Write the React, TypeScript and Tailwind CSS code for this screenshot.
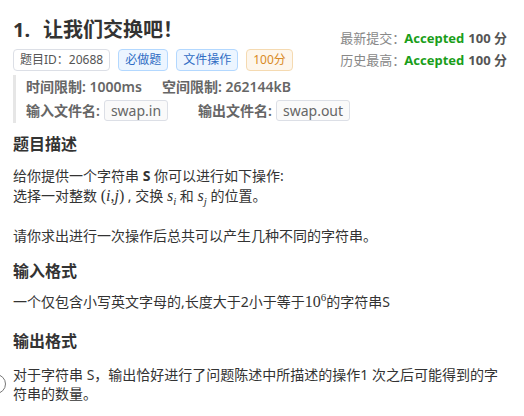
import React from "react";

const F = { fontFamily: '"Noto Sans", "Noto Sans CJK SC", sans-serif' };
const M = { fontFamily: '"Liberation Serif", "DejaVu Serif", serif' };

function Badge({ children, cls }: { children: React.ReactNode; cls: string }) {
  return (
    <span className={`inline-flex h-[22px] items-center whitespace-nowrap rounded-[4px] border px-[6px] text-[12px] leading-none ${cls}`}>
      {children}
    </span>
  );
}

function FileBox({ children }: { children: React.ReactNode }) {
  return (
    <span className="ml-[4px] inline-flex h-[21px] items-center rounded-[3px] border border-[#dcdfe6] bg-[#fafafa] px-[6px] text-[14px] font-normal text-[#666]">
      {children}
    </span>
  );
}

function Sub({ children }: { children: React.ReactNode }) {
  return <span className="relative top-[4px] text-[11px] leading-none">{children}</span>;
}

export default function App() {
  return (
    <div className="relative h-[416px] w-[524px] overflow-hidden bg-white text-[#333]" style={F}>
      <div className="px-[13px] pt-[16px]">
        <div className="flex justify-between">
          <div>
            <div className="flex h-[28px] items-center whitespace-nowrap text-[20px] font-bold leading-[28px] text-[#333]">
              <span className="mr-[13px]">1.</span>
              <span>让我们交换吧！</span>
            </div>
            <div className="mt-[5px] flex items-center gap-[8px]">
              <Badge cls="border-[#dcdfe6] bg-white text-[#555]">题目ID：20688</Badge>
              <Badge cls="border-[#b3d8ff] bg-[#ecf5ff] text-[#2f6cc4]">必做题</Badge>
              <Badge cls="border-[#b3d8ff] bg-[#ecf5ff] text-[#2f6cc4]">文件操作</Badge>
              <Badge cls="border-[#f5dab1] bg-[#fdf6ec] text-[#d98a24]">100分</Badge>
            </div>
          </div>
          <div className="mr-[4px] mt-[11px] whitespace-nowrap text-[13px] leading-[22px]">
            <div className="flex h-[22px] items-center">
              <span className="w-[64px] text-[#888]">最新提交：</span>
              <span className="font-bold text-[#1a9e1a]">Accepted</span>
              <span className="ml-[4px] font-bold text-[#555]">100 分</span>
            </div>
            <div className="flex h-[22px] items-center">
              <span className="w-[64px] text-[#888]">历史最高：</span>
              <span className="font-bold text-[#1a9e1a]">Accepted</span>
              <span className="ml-[4px] font-bold text-[#555]">100 分</span>
            </div>
          </div>
        </div>

        <div className="mt-[4px] border-l-[3px] border-[#e6e6e6] pl-[10px] text-[14px] font-semibold text-[#666]">
          <div className="flex h-[23px] items-center whitespace-nowrap">
            <span>时间限制: 1000ms</span>
            <span className="ml-[20px]">空间限制: 262144kB</span>
          </div>
          <div className="flex h-[25px] items-center whitespace-nowrap">
            <span>输入文件名:</span>
            <FileBox>swap.in</FileBox>
            <span className="ml-[30px]">输出文件名:</span>
            <FileBox>swap.out</FileBox>
          </div>
        </div>

        <h2 className="mt-[9px] text-[16px] font-bold leading-[24px]">题目描述</h2>
        <div className="mt-[10px] text-[14px] leading-[20px]">
          <p className="h-[20px]">
            给你提供一个字符串 <b>S</b> 你可以进行如下操作:
          </p>
          <p className="h-[20px]">
            选择一对整数{" "}
            <span style={M} className="text-[16px]">
              (<i>i</i>,<i>j</i>)
            </span>{" "}
            , 交换{" "}
            <span style={M} className="text-[16px]">
              <i>s</i>
              <Sub><i>i</i></Sub>
            </span>{" "}
            和{" "}
            <span style={M} className="text-[16px]">
              <i>s</i>
              <Sub><i>j</i></Sub>
            </span>{" "}
            的位置。
          </p>
          <p className="mt-[20px] h-[20px]">请你求出进行一次操作后总共可以产生几种不同的字符串。</p>
        </div>

        <h2 className="mt-[13px] text-[16px] font-bold leading-[24px]">输入格式</h2>
        <p className="mt-[9px] h-[20px] text-[14px] leading-[20px]">
          一个仅包含小写英文字母的,长度大于2小于等于
          <span style={M} className="text-[16px]">
            10<span className="relative top-[-6px] text-[11px] leading-none">6</span>
          </span>
          的字符串S
        </p>

        <h2 className="mt-[17px] text-[16px] font-bold leading-[24px]">输出格式</h2>
        <p className="mt-[12px] text-[14px] leading-[19px]">
          对于字符串 S，输出恰好进行了问题陈述中所描述的操作1 次之后可能得到的字符串的数量。
        </p>
      </div>

      <div className="absolute left-[-14px] top-[374px] h-[20px] w-[20px] rounded-full border-[1.5px] border-[#777] bg-white" />
    </div>
  );
}
